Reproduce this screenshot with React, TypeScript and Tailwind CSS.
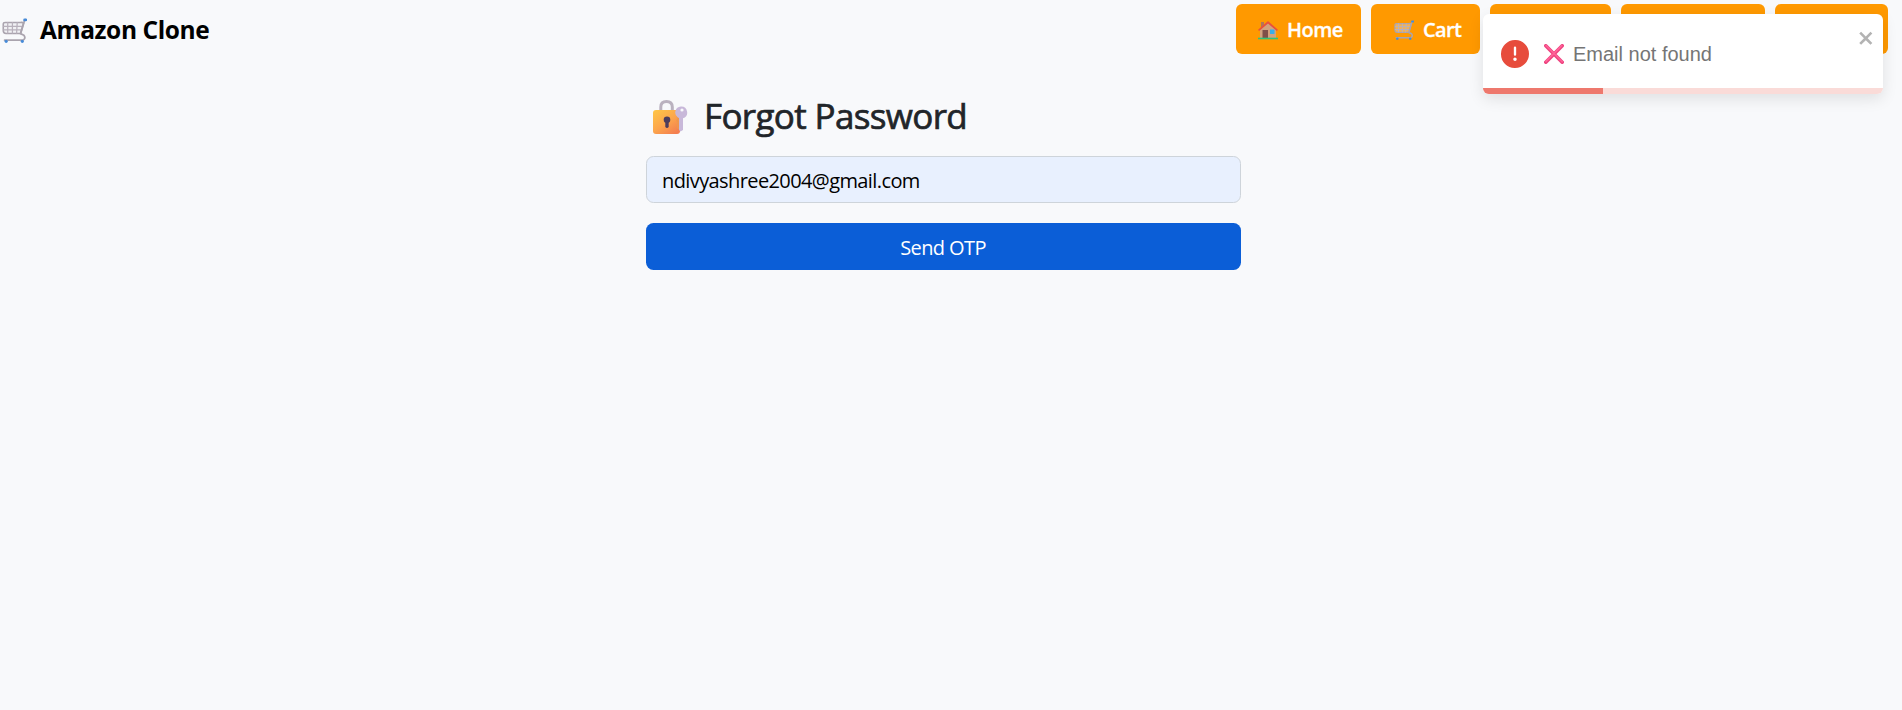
import { useState } from "react";

type IconProps = { className?: string };

function CartIcon({ className }: IconProps) {
  return (
    <svg viewBox="0 0 24 24" className={className} fill="none" strokeLinecap="round" strokeLinejoin="round">
      <path d="M1.2 5.5V12q0 2.8 2.6 2.8h14L20.7 5q-1-1.1-3-.7H3Q1.200 4.400 1.200 5.500Z" fill="#e4e1e7" fillOpacity=".35" stroke="#aaa4ae" strokeWidth="1.500" />
      <path d="M5.500 4.500V14.500M10 4.500V14.500M14.600 4.500 14 14.500M1.500 8H19.500M1.500 11.400H18.500" stroke="#b8b1bc" strokeWidth="1.200" />
      <path d="M23 1.600 21.700 2.200 17.800 15 21 16.500Q23.300 19.700 20 21.300H2.500" stroke="#aaa4ae" strokeWidth="1.700" />
      <path d="M21.700 1.800H23" stroke="#478bd8" strokeWidth="2.600" />
      <circle cx="4" cy="22.400" r="1.500" fill="#478bd8" />
      <circle cx="19.500" cy="22.400" r="1.500" fill="#478bd8" />
    </svg>
  );
}

function HouseIcon({ className }: IconProps) {
  return (
    <svg viewBox="0 0 20 20" className={className}>
      <path d="M3 2h3v7H3z" fill="#b27658" />
      <path d="M2 9 10 2l8 7v10H2z" fill="#d3a27d" />
      <path d="M4.500 10h5.500v8H4.500z" fill="#805049" />
      <path d="M12 9.500h4.500V14H12z" fill="#38aee9" />
      <path d="M1.200 9.900 10 2.200l8.800 7.700" fill="none" stroke="#e9513b" strokeWidth="1.800" strokeLinecap="round" strokeLinejoin="round" />
      <path d="M0 17.700h20v1.600H0z" fill="#2fc37b" />
    </svg>
  );
}

function LockIcon({ className }: IconProps) {
  return (
    <svg viewBox="0 0 36 36" className={className}>
      <defs>
        <linearGradient id="lock-body" x1="0" y1="0" x2=".8" y2="1">
          <stop offset="0" stopColor="#ffc747" />
          <stop offset=".55" stopColor="#fca64c" />
          <stop offset="1" stopColor="#f47e50" />
        </linearGradient>
      </defs>
      <path d="M8.800 12V8q0-5.500 5.700-5.500T20.300 8v4" fill="none" stroke="#bab2bf" strokeWidth="3" />
      <rect x="1" y="11" width="27" height="24" rx="3" fill="url(#lock-body)" />
      <circle cx="15" cy="20.700" r="3.300" fill="#4c3c5c" />
      <path d="M13.300 21h3.400v7q-1.700 2-3.400 0z" fill="#4c3c5c" />
      <path d="m26.500 16-1 1.800 1 1.700-1.500 2 1.500 2-1.300 2.500 1.300 4" fill="none" stroke="#ee984c" strokeWidth="1.500" />
      <path fillRule="evenodd" d="M28.800 7.500a6 6 0 0 0-3 10.900l1.200.6v12l1.500 1.500 2.500-1.500V19.200a6 6 0 0 0-2.200-11.700ZM30 9.400a1.600 1.600 0 1 1 0 3.200 1.600 1.600 0 0 1 0-3.200Z" fill="#c8b8d9" />
    </svg>
  );
}

function Toast({ onClose }: { onClose: () => void }) {
  return (
    <div role="alert" className="absolute left-[1483px] top-[14px] flex h-20 w-[400px] items-center overflow-hidden rounded-md bg-white pl-[18px] shadow-[0_5px_15px_rgba(0,0,0,0.1)]">
      <svg viewBox="0 0 24 24" className="size-7 shrink-0" fill="#e74c3c">
        <path d="M11.983 0a12.206 12.206 0 0 0-8.510 3.653A11.800 11.800 0 0 0 0 12.207 11.779 11.779 0 0 0 11.800 24h.214A12.111 12.111 0 0 0 24 11.791 11.766 11.766 0 0 0 11.983 0ZM10.500 16.542a1.476 1.476 0 0 1 1.449-1.530h.027a1.527 1.527 0 0 1 1.523 1.470 1.475 1.475 0 0 1-1.449 1.530h-.027a1.529 1.529 0 0 1-1.523-1.470ZM11 12.500v-6a1 1 0 0 1 2 0v6a1 1 0 1 1-2 0Z" />
      </svg>
      <svg viewBox="0 0 20 20" className="ml-[15px] size-5 shrink-0">
        <path d="m1.800 1.800 16.400 16.400M18.200 1.800 1.800 18.200" stroke="#ee4480" strokeWidth="3.600" strokeLinecap="round" />
        <path d="m2 1.500 16.200 16.200M17.800 1.600 2 17.400" stroke="#ff6297" strokeWidth="1.500" strokeLinecap="round" />
      </svg>
      <span className="ml-[9px] whitespace-nowrap font-['Liberation_Sans',sans-serif] text-[20px] leading-6 text-[#757575]">Email not found</span>
      <button aria-label="close" onClick={onClose} className="absolute right-2 top-[14px]">
        <svg viewBox="0 0 14 16" className="h-5 w-[17.5px]" fill="#b3b3b3">
          <path fillRule="evenodd" d="M7.710 8.230l3.750 3.750-1.480 1.480-3.750-3.750-3.750 3.750L1 11.980l3.750-3.750L1 4.480 2.480 3l3.750 3.750L9.980 3l1.480 1.480-3.750 3.750z" />
        </svg>
      </button>
      <div className="absolute inset-x-0 bottom-0 h-1.5 bg-[#fadbd8]">
        <div className="h-full w-[119.500px] bg-[#ee786d]" />
      </div>
    </div>
  );
}

export default function App() {
  const [open, setOpen] = useState(true);
  return (
    <div className="relative h-[710px] w-full overflow-hidden bg-[#f8f9fb] font-['Open_Sans',sans-serif]">
      <header className="flex items-start justify-between pr-[14px] pt-1">
        <div className="flex h-[50px] items-center pl-[2px]">
          <CartIcon className="mt-0.5 size-[25px]" />
          <span className="ml-[13px] whitespace-nowrap pt-[3px] text-[24.500px] font-bold tracking-[-0.4px] text-black">Amazon Clone</span>
        </div>
        <nav className="flex gap-2.5 text-[20px] font-semibold text-white">
          <a className="flex h-[50px] w-[125px] items-center rounded-md bg-[#ff9900] pl-[22px]">
            <HouseIcon className="mt-0.5 size-5" />
            <span className="ml-[9px] pt-px tracking-[-0.5px] [-webkit-text-stroke:0.3px_white]">Home</span>
          </a>
          <a className="flex h-[50px] w-[109px] items-center rounded-md bg-[#ff9900] pl-[23px]">
            <CartIcon className="mt-0.5 size-5" />
            <span className="ml-[9px] pt-px tracking-[-0.6px] [-webkit-text-stroke:0.3px_white]">Cart</span>
          </a>
          <a className="h-[50px] w-[121px] rounded-md bg-[#ff9900]" />
          <a className="h-[50px] w-36 rounded-md bg-[#ff9900]" />
          <a className="h-[50px] w-[113px] rounded-md bg-[#ff9900]" />
        </nav>
      </header>
      <main className="ml-[646px] mt-[42px] w-[595px]">
        <h2 className="flex h-[42px] items-center text-[#212529]">
          <LockIcon className="ml-1.5 size-9" />
          <span className="ml-[16px] whitespace-nowrap pb-0.5 text-[35px] leading-[42px] font-medium tracking-[-0.65px] [-webkit-text-stroke:0.7px_#212529]">Forgot Password</span>
        </h2>
        <input
          type="email"
          defaultValue="ndivyashree2004@gmail.com"
          className="mt-[18px] block h-[47px] w-full rounded-[7.500px] border border-[#ced4da] bg-[#e8f0fe] px-[15px] pt-px text-[20px] tracking-[-0.6px] text-black outline-none"
        />
        <button className="mt-5 block h-[47px] w-full rounded-[7.500px] bg-[#0b5ed7] pr-px pt-0.5 text-[20px] tracking-[-0.6px] text-white">Send OTP</button>
      </main>
      {open && <Toast onClose={() => setOpen(false)} />}
    </div>
  );
}
